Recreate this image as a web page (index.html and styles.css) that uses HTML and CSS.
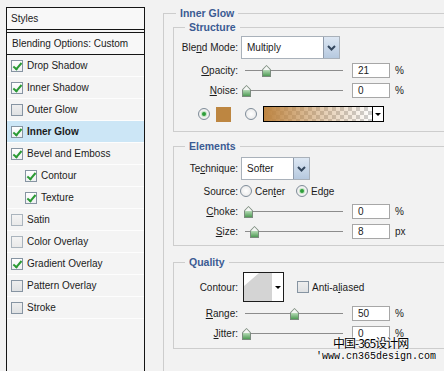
FILE: index.html
```html
<!DOCTYPE html>
<html lang="en">
<head>
    <meta charset="UTF-8">
    <meta name="viewport" content="width=device-width, initial-scale=1.0">
    <title>Layer Style - Inner Glow</title>
    <link rel="stylesheet" href="styles.css">
</head>
<body>
    <div class="page">
        <div class="styles-panel">
            <div class="panel-head">Styles</div>
            <div class="panel-blend">Blending Options: Custom</div>
            <ul class="fx-list">
                <li class="fx"><span class="cb on"></span>Drop Shadow</li>
                <li class="fx"><span class="cb on"></span>Inner Shadow</li>
                <li class="fx"><span class="cb"></span>Outer Glow</li>
                <li class="fx active"><span class="cb on"></span>Inner Glow</li>
                <li class="fx"><span class="cb on"></span>Bevel and Emboss</li>
                <li class="fx sub"><span class="cb on"></span>Contour</li>
                <li class="fx sub"><span class="cb on"></span>Texture</li>
                <li class="fx"><span class="cb light"></span>Satin</li>
                <li class="fx"><span class="cb light"></span>Color Overlay</li>
                <li class="fx"><span class="cb on"></span>Gradient Overlay</li>
                <li class="fx"><span class="cb"></span>Pattern Overlay</li>
                <li class="fx"><span class="cb"></span>Stroke</li>
            </ul>
        </div>

        <div class="options">
            <div class="group outer">
                <div class="group-title">Inner Glow</div>

                <div class="group structure">
                    <div class="group-title">Structure</div>
                    <div class="row tall first">
                        <span class="label">Ble<u>n</u>d Mode:</span>
                        <div class="select blend">
                            <span>Multiply</span>
                            <span class="select-btn"><svg width="9" height="6" viewBox="0 0 9 6"><polyline points="1,1 4.5,4.5 8,1" fill="none" stroke="#34475e" stroke-width="2"/></svg></span>
                        </div>
                    </div>
                    <div class="row slider-row">
                        <span class="label"><u>O</u>pacity:</span>
                        <div class="slider"><span class="thumb" style="left: 21px"></span></div>
                        <span class="num">21</span>
                        <span class="unit">%</span>
                    </div>
                    <div class="row">
                        <span class="label"><u>N</u>oise:</span>
                        <div class="slider"><span class="thumb" style="left: 1px"></span></div>
                        <span class="num">0</span>
                        <span class="unit">%</span>
                    </div>
                    <div class="row color-row">
                        <span class="radio on"></span>
                        <span class="swatch"></span>
                        <span class="radio gap"></span>
                        <div class="grad">
                            <span class="grad-fill"></span>
                            <span class="grad-arrow"><span class="tri"></span></span>
                        </div>
                    </div>
                </div>

                <div class="group elements">
                    <div class="group-title">Elements</div>
                    <div class="row tall first">
                        <span class="label">Te<u>c</u>hnique:</span>
                        <div class="select technique">
                            <span>Softer</span>
                            <span class="select-btn"><svg width="9" height="6" viewBox="0 0 9 6"><polyline points="1,1 4.5,4.5 8,1" fill="none" stroke="#34475e" stroke-width="2"/></svg></span>
                        </div>
                    </div>
                    <div class="row slider-row">
                        <span class="label">Source:</span>
                        <span class="radio src"></span>
                        <span class="opt">Cen<u>t</u>er</span>
                        <span class="radio on edge"></span>
                        <span class="opt">Ed<u>g</u>e</span>
                    </div>
                    <div class="row">
                        <span class="label"><u>C</u>hoke:</span>
                        <div class="slider"><span class="thumb" style="left: 3px"></span></div>
                        <span class="num">0</span>
                        <span class="unit">%</span>
                    </div>
                    <div class="row">
                        <span class="label"><u>S</u>ize:</span>
                        <div class="slider"><span class="thumb" style="left: 9px"></span></div>
                        <span class="num">8</span>
                        <span class="unit">px</span>
                    </div>
                </div>

                <div class="group quality">
                    <div class="group-title">Quality</div>
                    <div class="row contour-row">
                        <span class="label">Contour:</span>
                        <div class="contour">
                            <span class="contour-shape"></span>
                            <span class="contour-arrow"><span class="tri"></span></span>
                        </div>
                        <span class="cb aa"></span>
                        <span class="opt">Anti-a<u>l</u>iased</span>
                    </div>
                    <div class="row slider-row">
                        <span class="label"><u>R</u>ange:</span>
                        <div class="slider"><span class="thumb" style="left: 49px"></span></div>
                        <span class="num">50</span>
                        <span class="unit">%</span>
                    </div>
                    <div class="row">
                        <span class="label"><u>J</u>itter:</span>
                        <div class="slider"><span class="thumb" style="left: 1px"></span></div>
                        <span class="num">0</span>
                        <span class="unit">%</span>
                    </div>
                </div>
            </div>
        </div>

        <div class="watermark">
            <div class="wm-cn">中国-365设计网</div>
            <div class="wm-url">'www.cn365design.com</div>
        </div>
    </div>
</body>
</html>
```

FILE: styles.css
```css
* {
    margin: 0;
    padding: 0;
    box-sizing: border-box;
}

body {
    font-family: "Liberation Sans", Arial, sans-serif;
    font-size: 10px;
    color: #1b1b1b;
    background-color: #f2f2f2;
    overflow: hidden;
}

.page {
    position: relative;
    display: flex;
    align-items: flex-start;
    width: 444px;
    height: 371px;
    padding: 7px 0 0 6px;
    overflow: hidden;
}

/* left list of effects */

.styles-panel {
    flex: none;
    width: 139px;
    height: 380px;
    border: 1px solid #151515;
    background-color: #f4f4f4;
}

.panel-head {
    height: 22px;
    line-height: 21px;
    padding-left: 4px;
    border-bottom: 1px solid #151515;
    background-color: #f8f8f8;
}

.panel-blend {
    height: 23px;
    line-height: 21px;
    margin-top: 2px;
    padding-left: 5px;
    border-top: 1px solid #151515;
    border-bottom: 1px solid #151515;
    background-color: #f8f8f8;
}

.fx-list {
    list-style: none;
}

.fx {
    display: flex;
    align-items: center;
    height: 22px;
    padding-left: 4px;
    border-bottom: 1px solid #fdfdfd;
}

.fx.sub {
    padding-left: 18px;
}

.fx.active {
    background-color: #cce6f6;
    font-weight: bold;
}

.cb {
    position: relative;
    flex: none;
    width: 12px;
    height: 12px;
    margin-right: 4px;
    border: 1px solid #8694a2;
    background: linear-gradient(#eeeeee, #dfe1e3);
}

.cb.light {
    border-color: #aab4bd;
    background: linear-gradient(#f4f4f4, #e9e9e9);
}

.cb.on {
    background: linear-gradient(#ffffff, #eef0f2);
}

.cb.on::after {
    content: "";
    position: absolute;
    left: 3px;
    top: 0;
    width: 3px;
    height: 7px;
    border: solid #2a9a34;
    border-width: 0 2px 2px 0;
    transform: rotate(40deg);
}

/* right side: option groups */

.options {
    margin-left: 18px;
    margin-top: 6px;
}

.group {
    border: 1px solid #cdcdcd;
}

.group.outer {
    width: 300px;
    padding: 0 0 40px 9px;
}

.group-title {
    width: fit-content;
    height: 14px;
    line-height: 14px;
    margin: -8px 0 0 11px;
    padding: 0 4px;
    background-color: #f2f2f2;
    color: #3b5b93;
    font-size: 10.5px;
    font-weight: bold;
}

.outer > .group-title {
    margin-left: 3px;
}

.structure {
    margin-top: 7px;
    padding-bottom: 9px;
}

.elements {
    margin-top: 14px;
    padding-bottom: 4px;
}

.quality {
    margin-top: 16px;
    padding-bottom: 5px;
}

.row {
    display: flex;
    align-items: center;
    height: 20px;
}

.row.tall {
    height: 23px;
}

.row.first {
    margin-top: 2px;
}

.elements .row.first {
    margin-top: 4px;
}

.row.slider-row {
    margin-top: 1px;
}

.label {
    flex: none;
    width: 64px;
    text-align: right;
}

.select {
    display: flex;
    align-items: center;
    height: 23px;
    margin-left: 3px;
    padding-left: 5px;
    border: 1px solid #a9b1ba;
    background-color: #fff;
}

.select.blend {
    width: 99px;
}

.select.technique {
    width: 69px;
}

.select-btn {
    display: flex;
    align-items: center;
    justify-content: center;
    align-self: stretch;
    width: 16px;
    margin-left: auto;
    border-left: 1px solid #8f9bab;
    background: linear-gradient(#dde7f3, #b6c9df);
}

.slider {
    position: relative;
    flex: none;
    width: 104px;
    height: 20px;
    margin-left: 3px;
}

.slider::before {
    content: "";
    position: absolute;
    left: 4px;
    right: 2px;
    top: 10px;
    height: 1px;
    background-color: #8c8c8c;
}

.thumb {
    position: absolute;
    top: 5px;
    width: 9px;
    height: 12px;
    background-color: #7b8b7e;
    clip-path: polygon(50% 0, 100% 38%, 100% 100%, 0 100%, 0 38%);
}

.thumb::after {
    content: "";
    position: absolute;
    inset: 1px;
    background: linear-gradient(#f4f6f4 0 40%, #b5dab5 40%, #4f9c55);
    clip-path: polygon(50% 0, 100% 38%, 100% 100%, 0 100%, 0 38%);
}

.num {
    flex: none;
    width: 38px;
    height: 15px;
    margin-left: 7px;
    padding-left: 5px;
    line-height: 13px;
    border: 1px solid #a7a7a7;
    background-color: #fff;
}

.unit {
    margin-left: 5px;
}

.radio {
    position: relative;
    flex: none;
    width: 12px;
    height: 12px;
    border-radius: 50%;
    border: 1px solid #7f8c99;
    background: radial-gradient(#ffffff, #e4e4e4);
}

.radio.on::after {
    content: "";
    position: absolute;
    left: 3px;
    top: 3px;
    width: 4px;
    height: 4px;
    border-radius: 50%;
    background-color: #2e9e3a;
    box-shadow: 0 0 0 1px #c3e4c3;
}

.color-row {
    height: 16px;
    margin-top: 6px;
    padding-left: 24px;
}

.swatch {
    width: 15px;
    height: 15px;
    margin-left: 6px;
    background-color: #bd8641;
}

.radio.gap {
    margin-left: 14px;
}

.grad {
    display: flex;
    width: 121px;
    height: 16px;
    margin-left: 6px;
    border: 1px solid #000;
}

.grad-fill {
    flex: 1;
    background:
        linear-gradient(to right, #bd8441, rgba(189, 132, 65, 0.45) 50%, rgba(189, 132, 65, 0)),
        repeating-conic-gradient(#cfcfcf 0 25%, #fff 0 50%) 0 0 / 8px 8px;
}

.grad-arrow {
    display: flex;
    align-items: center;
    justify-content: center;
    width: 11px;
    border-left: 1px solid #000;
    background-color: #fff;
}

.tri {
    width: 0;
    height: 0;
    border-left: 3px solid transparent;
    border-right: 3px solid transparent;
    border-top: 3px solid #000;
}

.radio.src {
    margin-left: 2px;
}

.radio.edge {
    margin-left: 11px;
}

.opt {
    margin-left: 3px;
}

.contour-row {
    height: 30px;
    margin-top: 3px;
}

.contour {
    display: flex;
    width: 41px;
    height: 30px;
    margin-left: 5px;
    border: 1px solid #1c1c1c;
    background-color: #fff;
}

.contour-shape {
    width: 28px;
    background-color: #d4d4d4;
    clip-path: polygon(15px 0, 100% 0, 100% 100%, 0 100%, 0 13px);
}

.contour-arrow {
    display: flex;
    align-items: center;
    justify-content: center;
    flex: 1;
}

.cb.aa {
    margin: 0 0 0 13px;
}

/* watermark over the bottom right corner */

.watermark {
    position: absolute;
    left: 316px;
    top: 336px;
    color: #000;
    text-shadow: 0 0 2px #fff, 0 0 2px #fff, 0 0 1px #fff;
}

.wm-cn {
    margin-left: 17px;
    font-family: "Noto Sans CJK SC", sans-serif;
    font-size: 12px;
    line-height: 14px;
    letter-spacing: -1px;
}

.wm-url {
    font-family: "Liberation Mono", monospace;
    font-size: 10px;
    line-height: 13px;
}
```
